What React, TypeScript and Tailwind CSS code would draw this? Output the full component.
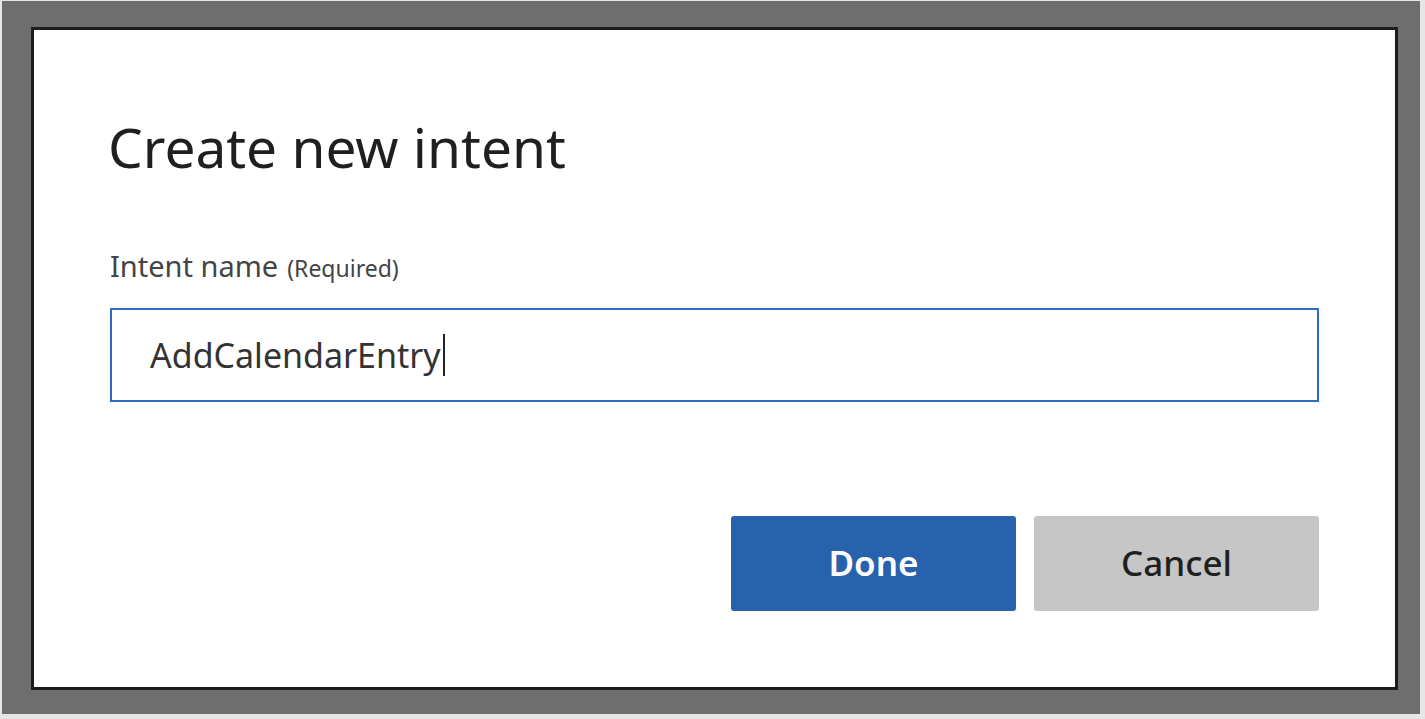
export default function App() {
  return (
    <div className="w-[1425px] h-[719px] bg-[#e6e6e6] overflow-hidden" style={{ fontFamily: '"Noto Sans", "Open Sans", sans-serif' }}>
      <div className="ml-[2px] mt-[1px] w-[1418px] h-[713px] bg-[#6e6e6e] pl-[29px] pt-[26px]">
        <div className="w-[1367px] h-[663px] border-[3px] border-[#1c1c1c] bg-white pl-[76px] pr-[74px] pt-[85px] flex flex-col">
          <h1 className="-ml-[2px] text-[55px] leading-[64px] text-[#1f1f1f] font-normal">Create new intent</h1>
          <div className="mt-[71px] flex items-baseline gap-[9px] text-[#444]">
            <span className="text-[29px] leading-[32px]">Intent name</span>
            <span className="text-[23px] leading-[24px]">(Required)</span>
          </div>
          <div className="mt-[26px] h-[94px] w-[1209px] border-2 border-[#2b6cc4] flex items-center pl-[38px]">
            <span className="text-[34px] text-[#333]">AddCalendarEntry</span>
            <span className="ml-[2px] w-[2px] h-[42px] bg-[#222]" />
          </div>
          <div className="mt-[114px] flex justify-end gap-[18px] w-[1209px]">
            <button className="w-[285px] h-[95px] rounded-[3px] bg-[#2962ac] text-white text-[35px] font-semibold">Done</button>
            <button className="w-[285px] h-[95px] rounded-[3px] bg-[#c6c6c6] text-[#1f1f1f] text-[35px] font-medium">Cancel</button>
          </div>
        </div>
      </div>
    </div>
  );
}
